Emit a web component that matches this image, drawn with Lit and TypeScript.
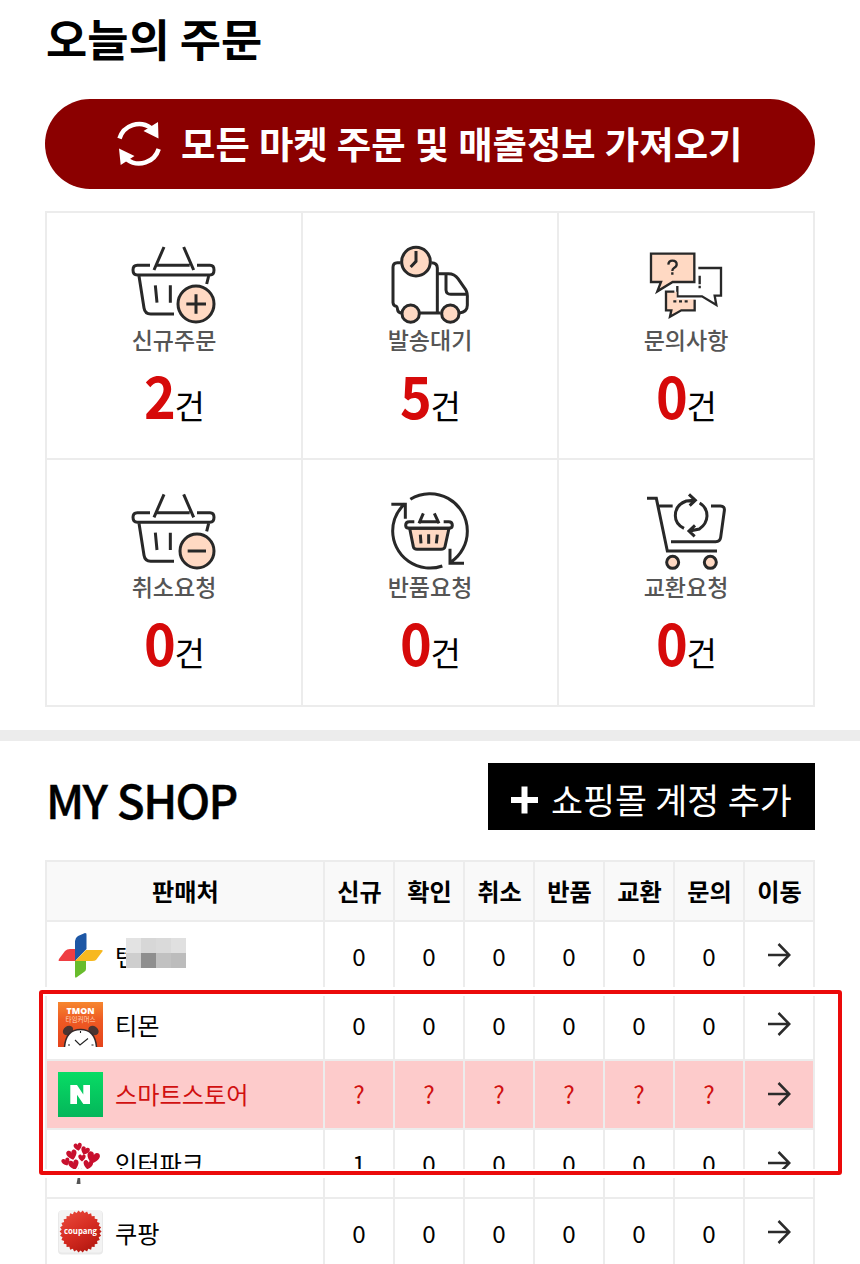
import { LitElement, html, svg, css } from "lit";
import { customElement } from "lit/decorators.js";
import { classMap } from "lit/directives/class-map.js";

const basket = (badge: unknown) => svg`
  <path d="M120 106H82Q69 106 69 120Q69 135 82 135H300Q312 135 312 120Q312 106 300 106H261M140 106H239M162 51L132 120M221 51L251 120"/>
  <path d="M87 138L102 234Q105 252 122 252H192M296 138L290 162M136 166L141 218M181 166V218"/>
  ${badge}`;

const truckIcon = svg`
  <path d="M92 98H82Q69 98 69 112V218Q70 228 79 229Q82 231 83 240Q84 248 96 249M149 249H212M184 98Q202 98 202 114V249M203 131H235Q254 131 264 146L287 179Q293 188 292 206V226Q292 246 268 249M228 132V180Q229 193 242 193H290"/>
  <circle class="skin" cx="138" cy="95" r="43"/><circle class="skin" cx="122" cy="251" r="26"/><circle class="skin" cx="241" cy="251" r="26"/>
  <path d="M138 63V94L122 111"/>`;

const talkIcon = svg`
  <g class="thin"><path class="skin" d="M93 71H223V156H158L112 184L123 156H93Z"/>
  <path d="M235 114H303V197H284L289 225L246 199H172V168"/>
  <path class="fill" d="M163 185H138V241H154L150 260L184 241H224V208H170V185Z"/>
  <path d="M163 185H138V241H154L150 260L184 241H224V209"/>
  <path d="M145 104Q146 92 157 92Q170 92 170 103Q170 110 162 114Q157 117 157 123M157 127V134M239 137V163M239 167V175M160 214h9M177 214h9M194 214h9"/></g>`;

const returnIcon = svg`
  <path d="M121 58A112 112 0 0 1 292 153A112 112 0 0 1 243 246M217 258A112 112 0 0 1 68 153A112 112 0 0 1 105 71M64 73H106V116M240 206V250H282"/>
  <path class="skin" d="M119 145L130 200Q132 208 141 208H213Q223 208 225 200L237 145Z"/>
  <path d="M133 125H118Q107 125 107 136Q107 145 118 145H236Q247 145 247 136Q247 125 236 125H221M151 125H204M160 100L147 130M193 100L207 130M151 164L153 190M176 163V191M202 164L199 190"/>`;

const cartIcon = svg`
  <path d="M81 55H109L142 213H291M118 78H158M273 78H301Q315 79 313 92L302 172Q300 185 287 185H153"/>
  <path d="M192 145Q166 132 166 107Q166 75 199 63L221 61M207 43L226 61L209 77M239 69Q261 82 261 108Q260 132 238 147L209 153M225 136L207 153L224 169"/>
  <circle class="skin" cx="158" cy="247" r="18"/><circle class="skin" cx="271" cy="247" r="18"/>`;

const CARDS = [
  { label: "신규주문", n: "2", box: "-3 30 390 255", art: basket(svg`<circle class="skin" cx="258" cy="222" r="54"/><path d="M229 222H288M258 193V251"/>`) },
  { label: "발송대기", n: "5", box: "-15 30 390 255", art: truckIcon },
  { label: "문의사항", n: "0", box: "3 30 390 255", art: talkIcon },
  { label: "취소요청", n: "0", box: "-3 21 390 255", art: svg`<g transform="translate(0 -8)">${basket(svg`<circle class="skin" cx="261" cy="221" r="51"/><path d="M233 221H288"/>`)}</g>` },
  { label: "반품요청", n: "0", box: "-15 21 390 255", art: returnIcon },
  { label: "교환요청", n: "0", box: "3 21 390 255", art: cartIcon },
];

const seal = Array.from({ length: 60 }, (_, i) => {
  const a = (i * Math.PI) / 30, r = i % 2 ? 19 : 21;
  return `${(22.6 + r * Math.cos(a)).toFixed(2)},${(21.5 + r * Math.sin(a)).toFixed(2)}`;
}).join(" ");

const heart = (x: number, y: number, s: number, r: number) => svg`
  <path transform="translate(${x} ${y}) rotate(${r}) scale(${s})" fill="#c8102e" d="M0 4C-7 -1 -4 -5 -1.500 -4Q0 -3.500 0 -2Q0 -3.500 1.500 -4C4 -5 7 -1 0 4Z"/>`;

const LOGOS: Record<string, unknown> = {
  pin: svg`
    <path fill="#ef3e42" d="M7 18Q9 16 12 16H18V28H1Q0 28 1 26Z"/>
    <path fill="#1d57a5" d="M17 8Q17 5 20 3L27 0Q29 0 28.500 2V16L17 28Z"/>
    <path fill="#f7b81f" d="M17 28L28 17H43Q46 17 44 19L38 27Q37 28 34 28Z"/>
    <path fill="#68bc2c" d="M17 28H28V36Q28 38 26 39L19 44Q17 46 17 43Z"/>`,
  tmon: svg`
    <defs><linearGradient id="o" x2="0" y2="1"><stop stop-color="#f6862f"/><stop offset=".4" stop-color="#ee5a23"/><stop offset="1" stop-color="#e5441c"/></linearGradient></defs>
    <path fill="url(#o)" d="M0 0H45V45H0Z"/>
    <text x="22.500" y="12.300" class="logo-bold" font-size="8.800" textLength="28" lengthAdjust="spacingAndGlyphs" fill="#fff">TMON</text>
    <text x="22.500" y="20.300" class="logo-thin" font-size="7" textLength="30" lengthAdjust="spacingAndGlyphs" fill="#ffd5bd">타임커머스</text>
    <ellipse cx="10" cy="28.500" rx="5.500" ry="4.300" transform="rotate(-35 10 28.500)" fill="#4a3431"/><ellipse cx="35.500" cy="28.500" rx="5.500" ry="4.300" transform="rotate(35 35.500 28.500)" fill="#4a3431"/>
    <path fill="#fff" stroke="#35292a" stroke-width="1.500" d="M6.500 45Q8 27.500 22.500 27.500Q37 27.500 38.500 45"/>
    <path fill="none" stroke="#222" stroke-width="1.100" d="M17 38L22 43L30 36.500M22.500 29v2M10 43h2M33.500 43h2"/>`,
  naver: svg`
    <defs><linearGradient id="g" x2="0" y2="1"><stop stop-color="#08dc65"/><stop offset="1" stop-color="#04b65a"/></linearGradient></defs>
    <path fill="url(#g)" d="M0 0H45V45H0Z"/><path fill="#fff" d="M12.300 13H19L25.300 22.500V13H32V32H25.300L19 22.700V32H12.300Z"/>`,
  tree: svg`
    ${heart(20, 6, 0.95, -10)}${heart(14, 14, 1.2, -15)}${heart(27, 10, 1, 20)}${heart(35, 17, 1.45, 15)}${heart(24, 17, 0.85, 0)}${heart(8, 21, 0.95, -20)}${heart(16, 24, 1.2, -15)}${heart(30, 24, 1.1, 10)}
    <path fill="#555" d="M20 26L21 33L24 27L22 35L22.500 43H18.500L20 35Z"/>`,
  seal: svg`
    <defs><linearGradient id="r" x1=".2" x2=".8" y2="1"><stop stop-color="#e8483a"/><stop offset=".5" stop-color="#d52b21"/><stop offset="1" stop-color="#b0160f"/></linearGradient></defs>
    <rect width="45" height="44" y=".5" rx="4" fill="#e9e9e9"/><rect x="1" width="43" height="42" y=".5" rx="3" fill="#f3f3f3"/><polygon points="${seal}" fill="url(#r)"/>
    <text x="22.500" y="24" class="logo-thin" font-size="9" font-weight="700" textLength="33" lengthAdjust="spacingAndGlyphs" fill="#fff">coupang</text>`,
};

const COLS = ["판매처", "신규", "확인", "취소", "반품", "교환", "문의", "이동"];
const SHOPS = [
  { name: "텐", logo: "pin", v: "000000", masked: true },
  { name: "티몬", logo: "tmon", v: "000000" },
  { name: "스마트스토어", logo: "naver", v: "??????", alert: true },
  { name: "인터파크", logo: "tree", v: "100000" },
  { name: "쿠팡", logo: "seal", v: "000000" },
];
const MASK = ["#e3e3e3", "#d7d7d7", "#dadada", "#e0e0e0", "#cecece", "#8f8f8f", "#c1c1c1", "#bcbcbc"];

@customElement("app-root")
export class AppRoot extends LitElement {
  static styles = css`
    :host { display: block; position: relative; height: 1264px; overflow: hidden; background: #fff; color: #000;
      font-family: "Noto Sans CJK KR", sans-serif; }
    * { box-sizing: border-box; }
    .orders { padding: 0 45px; height: 730px; }
    .title { margin: 0; height: 99px; padding: 6px 0 0 1px; font-size: 44.800px; line-height: 64px; font-weight: 700; white-space: nowrap; }
    .sync { display: flex; align-items: center; width: 770px; height: 90px; padding: 0 0 0 72px; gap: 20px; border: 0; border-radius: 45px;
      background: #8b0000; color: #fff; font: 700 37.4px/54px "Noto Sans CJK KR", sans-serif; word-spacing: .6px; white-space: nowrap; }
    .sync svg { width: 44px; height: 46px; flex: none; }
    .sync span { padding-bottom: 3px; }
    .grid { display: grid; grid-template-columns: repeat(3, 254px); grid-template-rows: repeat(2, 245px); gap: 2px; padding: 2px;
      width: 770px; height: 496px; margin-top: 22px; background: #ececec; }
    .card { display: flex; flex-direction: column; align-items: center; padding-top: 27px; background: #fff; }
    .art { width: 130px; height: 85px; fill: none; stroke: #282828; stroke-width: 9; }
    .art .skin { fill: #ffd9c3; }
    .art .fill { fill: #ffd9c3; stroke: none; }
    .art .thin { stroke-width: 7; }
    .label { margin-top: -1px; font-size: 23px; line-height: 30px; color: #555; font-weight: 500; }
    .count { display: flex; align-items: baseline; margin-top: -2px; line-height: 84px; height: 84px; }
    .num { font-size: 58px; font-weight: 700; color: #d60a0a; letter-spacing: -3px; transform: scaleX(.93); }
    .unit { font-size: 33px; }
    .rule { height: 11px; background: #ececec; }
    .shop { padding: 22px 45px 0; }
    .head { display: flex; justify-content: space-between; height: 97px; }
    .name { margin: 0; font-size: 46px; line-height: 66px; padding: 3px 0 0 1px; font-weight: 500; letter-spacing: -1.700px; word-spacing: 2px; -webkit-text-stroke: .4px #000; }
    .add { display: flex; align-items: center; width: 327px; height: 67px; padding: 6px 0 0 23px; gap: 13px; border: 0; background: #000; color: #fff;
      font: 400 34.800px/50px "Noto Sans CJK KR", sans-serif; word-spacing: .5px; white-space: nowrap; }
    .add svg { width: 27px; height: 28px; flex: none; }
    .add span { padding-bottom: 1px; }
    .table { display: grid; grid-template-columns: 276px repeat(7, 1fr); gap: 0 2px; width: 770px; padding: 0 2px; background: #ececec; }
    .th, .td { display: flex; align-items: center; justify-content: center; font-size: 24.200px; background: #fff; white-space: nowrap; }
    .th { height: 62px; padding: 0 0 1px 1px; background: #f9f9f9; font-weight: 700; border-top: 2px solid #ececec; border-bottom: 2px solid #ececec; }
    .td { height: 69.250px; border-bottom: 2px solid #ececec; padding-bottom: 1px; }
    .td svg.arrow { width: 24px; height: 24px; fill: none; stroke: #2b2b2b; stroke-width: 2.500; }
    .shopname { position: relative; justify-content: flex-start; gap: 12px; padding: 0 0 0 11px; }
    .shopname span { padding-bottom: 1px; }
    .logo { width: 45px; height: 45px; flex: none; }
    .logo-bold, .logo-thin { text-anchor: middle; font-family: "Open Sans", "Noto Sans CJK KR", sans-serif; }
    .logo-bold { font-weight: 800; }
    .alert { background: #fdcbcb; color: #d11010; }
    .mask { position: absolute; left: 79px; top: 16px; display: grid; grid-template-columns: repeat(4, 15px); grid-auto-rows: 15px; }
    .frame { position: absolute; left: 39px; top: 990px; width: 803px; height: 185px; border: 4px solid #eb0a0a; border-radius: 3px;
      box-shadow: 0 0 0 3px #fff, inset 0 0 0 2px #fff; }
  `;

  render() {
    return html`
      <section class="orders">
        <h1 class="title">오늘의 주문</h1>
        <button class="sync">
          <svg viewBox="0 0 44 46"><g fill="none" stroke="#fff" stroke-width="4.500"><path d="M2.500 17.500A20.500 20.500 0 0 1 34 7M41.700 28A20.500 20.500 0 0 1 10 38.500"/></g><path fill="#fff" d="M41 1L41.500 17.500L26.500 10ZM3.700 44L2 27.500L17.500 35Z"/></svg>
          <span>모든 마켓 주문 및 매출정보 가져오기</span>
        </button>
        <div class="grid">
          ${CARDS.map((c) => html`
            <div class="card">
              <svg class="art" viewBox=${c.box}>${c.art}</svg>
              <div class="label">${c.label}</div>
              <div class="count"><span class="num">${c.n}</span><span class="unit">건</span></div>
            </div>`)}
        </div>
      </section>
      <div class="rule"></div>
      <section class="shop">
        <div class="head">
          <h2 class="name">MY SHOP</h2>
          <button class="add"><svg viewBox="0 0 27 28"><path stroke="#fff" stroke-width="6" d="M13.500 0.500V27.500M0 14H27"/></svg><span>쇼핑몰 계정 추가</span></button>
        </div>
        <div class="table">
          ${COLS.map((c) => html`<div class="th">${c}</div>`)}
          ${SHOPS.map((s) => {
            const cls = (more = {}) => classMap({ td: true, alert: !!s.alert, ...more });
            return html`
              <div class=${cls({ shopname: true })}>
                <svg class="logo" viewBox="0 0 45 45">${LOGOS[s.logo]}</svg><span>${s.name}</span>
                ${s.masked ? html`<div class="mask">${MASK.map((m) => html`<i style="background:${m}"></i>`)}</div>` : ""}
              </div>
              ${[...s.v].map((v) => html`<div class=${cls()}>${v}</div>`)}
              <div class=${cls()}><svg class="arrow" viewBox="0 0 24 24"><path d="M1 12H22M11.500 1L22.300 12L11.500 23"/></svg></div>`;
          })}
        </div>
      </section>
      <div class="frame"></div>
    `;
  }
}
